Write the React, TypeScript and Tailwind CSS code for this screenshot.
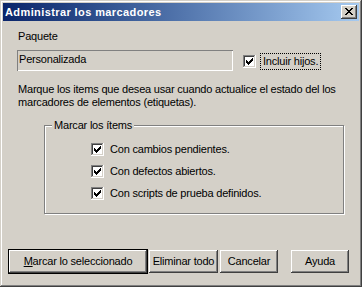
const CHECK_COLS: [number, number][] = [
  [0, 2],
  [1, 3],
  [2, 4],
  [3, 3],
  [4, 2],
  [5, 1],
  [6, 0],
];

// rows of the caption close glyph: [x, width]
const CLOSE_ROWS: [number, number][][] = [
  [[0, 2], [6, 2]],
  [[1, 2], [5, 2]],
  [[2, 4]],
  [[3, 2]],
  [[2, 4]],
  [[1, 2], [5, 2]],
  [[0, 2], [6, 2]],
];

function CheckBox() {
  return (
    <svg width="13" height="13" viewBox="0 0 13 13" shapeRendering="crispEdges" className="shrink-0">
      <rect x="0" y="0" width="13" height="13" fill="#ffffff" />
      <rect x="0" y="0" width="12" height="12" fill="#808080" />
      <rect x="1" y="1" width="11" height="11" fill="#d4d0c8" />
      <rect x="1" y="1" width="10" height="10" fill="#404040" />
      <rect x="2" y="2" width="9" height="9" fill="#ffffff" />
      {CHECK_COLS.map(([x, y]) => (
        <rect key={x} x={3 + x} y={3 + y} width="1" height="3" fill="#000000" />
      ))}
    </svg>
  );
}

function CloseButton() {
  return (
    <div className="w-[16px] h-[14px] bg-[#d4d0c8] shadow-[inset_-1px_-1px_#404040,inset_1px_1px_#ffffff,inset_-2px_-2px_#808080] relative">
      <svg width="16" height="14" viewBox="0 0 16 14" shapeRendering="crispEdges" className="block">
        {CLOSE_ROWS.map((row, y) =>
          row.map(([x, w]) => <rect key={`${y}-${x}`} x={4 + x} y={3 + y} width={w} height="1" fill="#000000" />)
        )}
      </svg>
    </div>
  );
}

function Button({ children, width, isDefault }: { children: React.ReactNode; width: string; isDefault?: boolean }) {
  const face = "shadow-[inset_-1px_-1px_#404040,inset_1px_1px_#ffffff,inset_-2px_-2px_#808080]";
  return (
    <div
      className={`${width} ${isDefault ? "h-[25px] border border-black" : "h-[23px]"} bg-[#d4d0c8] ${face} flex items-center justify-center text-[11px] leading-[13px] text-black shrink-0`}
    >
      {children}
    </div>
  );
}

const items = ["Con cambios pendientes.", "Con defectos abiertos.", "Con scripts de prueba definidos."];

export default function App() {
  return (
    <div className="w-[362px] h-[287px] bg-[#d4d0c8] p-[3px] flex flex-col font-['Liberation_Sans',Arial,sans-serif] text-[11px] leading-[13px] tracking-[-0.2px] text-black shadow-[inset_-1px_-1px_#404040,inset_1px_1px_#d4d0c8,inset_-2px_-2px_#808080,inset_2px_2px_#ffffff] overflow-hidden">
      {/* caption */}
      <div className="h-[18px] shrink-0 flex items-center justify-between pl-[2px] pr-[2px] bg-gradient-to-r from-[#0a246a] to-[#a6caf0]">
        <span className="text-white font-bold text-[11px] leading-[13px] tracking-[0.4px]">Administrar los marcadores</span>
        <CloseButton />
      </div>

      <div className="flex flex-col">
        <div className="mt-[9px] ml-[15px]">Paquete</div>

        <div className="mt-[7px] flex items-start">
          <div className="ml-[14px] w-[216px] h-[21px] pl-[2px] pt-[3px] shadow-[inset_1px_1px_#808080,inset_-1px_-1px_#ffffff]">
            Personalizada
          </div>
          <div className="ml-[10px] mt-[5px]">
            <CheckBox />
          </div>
          <div className="ml-[4px] mt-[3px] border border-dotted border-black px-[2px] py-[1px]">Incluir hijos.</div>
        </div>

        <p className="mt-[12px] ml-[15px]">
          Marque los items que desea usar cuando actualice el estado del los
          <br />
          marcadores de elementos (etiquetas).
        </p>

        <div className="mt-[16px] ml-[41px] w-[300px] h-[89px] border border-[#808080] shadow-[inset_1px_1px_#ffffff,1px_1px_#ffffff] relative">
          <span className="absolute left-[7px] top-[-7px] px-[2px] bg-[#d4d0c8]">Marcar los ítems</span>
          <div className="mt-[17px] ml-[46px] flex flex-col gap-[9px]">
            {items.map((label) => (
              <div key={label} className="flex items-center h-[13px]">
                <CheckBox />
                <span className="ml-[6px]">{label}</span>
              </div>
            ))}
          </div>
        </div>

        <div className="mt-[35px] ml-[5px] flex items-center">
          <Button width="w-[140px]" isDefault>
            <span>
              <span className="underline">M</span>arcar lo seleccionado
            </span>
          </Button>
          <div className="ml-[1px]">
            <Button width="w-[69px]">Eliminar todo</Button>
          </div>
          <div className="ml-[2px]">
            <Button width="w-[58px]">Cancelar</Button>
          </div>
          <div className="ml-[13px]">
            <Button width="w-[58px]">Ayuda</Button>
          </div>
        </div>
      </div>
    </div>
  );
}
